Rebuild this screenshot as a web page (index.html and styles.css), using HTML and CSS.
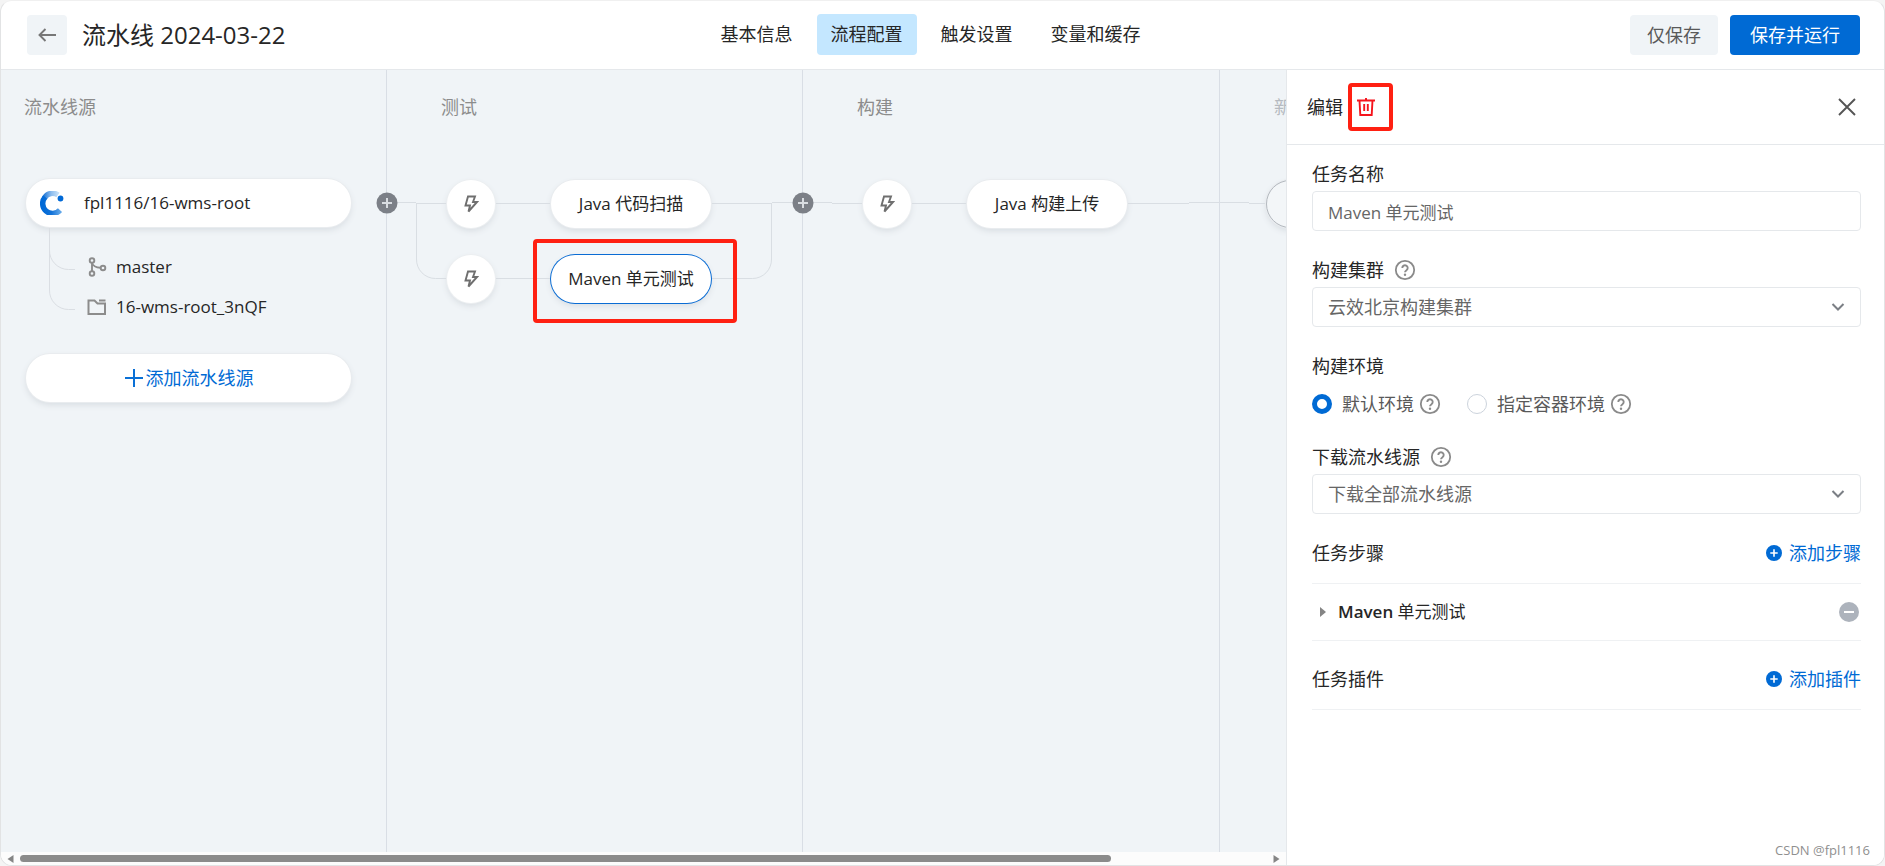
FILE: index.html
```html
<!DOCTYPE html>
<html lang="zh-CN">
<head>
<meta charset="utf-8">
<title>流水线 2024-03-22</title>
<link rel="stylesheet" href="styles.css">
</head>
<body>
<svg class="defs" aria-hidden="true">
  <symbol id="bolt" viewBox="0 0 16 20"><path d="M5 2.500h7l-2 5.500h4L5.500 17.500 7 11.500H2.500z" fill="none" stroke="#6f6f6f" stroke-width="1.900"/></symbol>
  <symbol id="help" viewBox="0 0 22 22"><circle cx="11" cy="11" r="9.200" fill="none" stroke="#8a8a8a" stroke-width="1.800"/><path d="M8.300 9a2.700 2.700 0 1 1 4.200 2.200c-1 .7-1.500 1.100-1.500 2.100" fill="none" stroke="#8a8a8a" stroke-width="1.900"/><circle cx="11" cy="15.700" r="1.200" fill="#8a8a8a"/></symbol>
  <symbol id="chevron" viewBox="0 0 14 10"><path d="M1.500 2 7 7.500 12.500 2" fill="none" stroke="#7b7f85" stroke-width="2"/></symbol>
  <symbol id="plus-dot" viewBox="0 0 22 22"><circle cx="11" cy="11" r="10.500" fill="#7c8087"/><path d="M11 6v10M6 11h10" stroke="#d9dde1" stroke-width="2"/></symbol>
  <symbol id="plus-blue" viewBox="0 0 16 16"><circle cx="8" cy="8" r="8" fill="#006ad4"/><path d="M8 4.300v7.400M4.300 8h7.400" stroke="#fff" stroke-width="1.600"/></symbol>
</svg>
<div class="app">
  <header class="topbar">
    <div class="heading">
      <button class="back" aria-label="返回"><svg width="20" height="16" viewBox="0 0 20 16"><path d="M19 8H2.500M8.500 2l-6 6 6 6" fill="none" stroke="#777" stroke-width="1.900"/></svg></button>
      <h1>流水线 2024-03-22</h1>
    </div>
    <nav class="tabs">
      <a class="tab" href="#">基本信息</a>
      <a class="tab active" href="#">流程配置</a>
      <a class="tab" href="#">触发设置</a>
      <a class="tab" href="#">变量和缓存</a>
    </nav>
    <div class="actions">
      <button class="btn">仅保存</button>
      <button class="btn primary">保存并运行</button>
    </div>
  </header>
  <main class="workspace">
    <section class="canvas">
      <div class="stages">
        <section class="stage source">
          <h2>流水线源</h2>
          <button class="node repo">
            <svg width="24" height="24" viewBox="0 0 24 24">
              <defs><linearGradient id="tail" x1="0" x2="1"><stop offset="0" stop-color="#2d7fd8"/><stop offset=".5" stop-color="#8dbdee"/><stop offset="1" stop-color="#c3def7"/></linearGradient>
              <linearGradient id="bowl" x1="0" x2="1"><stop offset="0" stop-color="#0069d6"/><stop offset=".5" stop-color="#1272d8"/><stop offset="1" stop-color="#5fa5e8"/></linearGradient></defs>
              <path d="M4.500 7A9.300 9.300 0 0 1 18 4" fill="none" stroke="url(#tail)" stroke-width="5.500"/>
              <path d="M5.200 6A9 9 0 1 0 20 19.200" fill="none" stroke="url(#bowl)" stroke-width="5.500"/>
              <circle cx="20.500" cy="7.500" r="2.900" fill="#0069d6"/>
            </svg>
            <span>fpl1116/16-wms-root</span>
          </button>
          <div class="details">
            <svg class="tree" width="26" height="83" viewBox="0 0 26 83"><path d="M.5 0v62a19 19 0 0 0 19 19.500H26M.5 22a19 19 0 0 0 19 19.500H26" fill="none" stroke="#dadee3"/></svg>
            <ul>
              <li><svg width="20" height="20" viewBox="0 0 20 20"><g fill="none" stroke="#8c8c8c" stroke-width="1.900"><circle cx="5" cy="3.500" r="2.300"/><circle cx="5" cy="16.500" r="2.300"/><circle cx="16" cy="11" r="2.300"/><path d="M5 6v8M5 6c1 3 4 4.500 8.500 4.700"/></g></svg>master</li>
              <li><svg width="20" height="20" viewBox="0 0 20 20"><path d="M1.500 3.500h6l3 3h7.500v10.500H1.500zM12 3.500h6.500" fill="none" stroke="#8c8c8c" stroke-width="2"/></svg>16-wms-root_3nQF</li>
            </ul>
          </div>
          <button class="node add"><svg width="20" height="20" viewBox="0 0 20 20"><path d="M10 1v18M1 10h18" stroke="#0a70d6" stroke-width="2"/></svg>添加流水线源</button>
        </section>

        <section class="stage">
          <svg class="wires" width="417" height="260" viewBox="0 0 417 260"><g fill="none" stroke="#d9dee3"><path d="M0 132.500h29M385 132.500h32M29 133.500h356M29.500 133v56a19 19 0 0 0 19 19.500h317a19 19 0 0 0 19-19.500v-56"/></g></svg>
          <button class="insert" aria-label="添加阶段"><svg width="22" height="22"><use href="#plus-dot"/></svg></button>
          <h2>测试</h2>
          <div class="lane">
            <button class="trigger" aria-label="触发"><svg width="16" height="20"><use href="#bolt"/></svg></button>
            <button class="node task">Java 代码扫描</button>
          </div>
          <div class="lane">
            <button class="trigger" aria-label="触发"><svg width="16" height="20"><use href="#bolt"/></svg></button>
            <div class="marked"><button class="node task selected">Maven 单元测试</button><i class="marker"></i></div>
          </div>
        </section>

        <section class="stage">
          <svg class="wires" width="417" height="260" viewBox="0 0 417 260"><path d="M0 132.500h29M29 133.500h357M386 132.500h31" fill="none" stroke="#d9dee3"/></svg>
          <button class="insert" aria-label="添加阶段"><svg width="22" height="22"><use href="#plus-dot"/></svg></button>
          <h2>构建</h2>
          <div class="lane">
            <button class="trigger" aria-label="触发"><svg width="16" height="20"><use href="#bolt"/></svg></button>
            <button class="node task">Java 构建上传</button>
          </div>
        </section>

        <section class="stage pending">
          <svg class="wires" width="417" height="260" viewBox="0 0 417 260"><path d="M0 132.500h29M29 133.500h20" fill="none" stroke="#d9dee3"/></svg>
          <h2>新</h2>
          <div class="lane"><button class="node task" aria-label="新任务"></button></div>
        </section>
      </div>
      <div class="scrollbar">
        <svg width="7" height="8" viewBox="0 0 7 8"><path d="M6.500 0v8L.5 4z" fill="#858585"/></svg>
        <div class="track"><div class="thumb"></div></div>
        <svg width="7" height="8" viewBox="0 0 7 8"><path d="M.5 0v8l6-4z" fill="#858585"/></svg>
      </div>
    </section>

    <aside class="panel">
      <div class="panel-head">
        <h2>编辑</h2>
        <div class="marked"><button class="icon-btn" aria-label="删除"><svg width="20" height="20" viewBox="0 0 20 20"><path d="M1 3.500h18M10 1v2.500M3.500 3.500l.8 14.500h11.400l.8-14.500M8.200 7v7M11.800 7v7" fill="none" stroke="#f5141c" stroke-width="1.900"/></svg></button><i class="marker"></i></div>
        <button class="icon-btn close" aria-label="关闭"><svg width="18" height="18" viewBox="0 0 18 18"><path d="M1 1l16 16M17 1 1 17" stroke="#555" stroke-width="1.900"/></svg></button>
      </div>
      <form class="form">
        <div class="field">
          <label for="task-name">任务名称</label>
          <input id="task-name" class="control mixed" type="text" value="Maven 单元测试">
        </div>
        <div class="field">
          <div class="label-row"><label for="cluster">构建集群</label><svg width="22" height="22"><use href="#help"/></svg></div>
          <div class="select"><select id="cluster" class="control"><option>云效北京构建集群</option></select><svg width="14" height="10"><use href="#chevron"/></svg></div>
        </div>
        <fieldset class="field">
          <legend>构建环境</legend>
          <div class="radios">
            <input id="env-default" type="radio" name="env" checked><label for="env-default">默认环境</label><svg width="22" height="22"><use href="#help"/></svg>
            <input id="env-container" type="radio" name="env"><label for="env-container">指定容器环境</label><svg width="22" height="22"><use href="#help"/></svg>
          </div>
        </fieldset>
        <div class="field">
          <div class="label-row"><label for="download">下载流水线源</label><svg width="22" height="22"><use href="#help"/></svg></div>
          <div class="select"><select id="download" class="control"><option>下载全部流水线源</option></select><svg width="14" height="10"><use href="#chevron"/></svg></div>
        </div>
        <div class="section-row"><h3>任务步骤</h3><a href="#"><svg width="16" height="16"><use href="#plus-blue"/></svg>添加步骤</a></div>
        <div class="step">
          <svg width="6" height="10" viewBox="0 0 6 10"><path d="M0 0v10l6-5z" fill="#858585"/></svg>
          <span><b>Maven</b> 单元测试</span>
          <button type="button" class="icon-btn" aria-label="移除"><svg width="20" height="20" viewBox="0 0 20 20"><circle cx="10" cy="10" r="10" fill="#adb3bc"/><path d="M5 10h10" stroke="#fff" stroke-width="2"/></svg></button>
        </div>
        <div class="section-row plugins"><h3>任务插件</h3><a href="#"><svg width="16" height="16"><use href="#plus-blue"/></svg>添加插件</a></div>
      </form>
      <footer>CSDN @fpl1116</footer>
    </aside>
  </main>
</div>
</body>
</html>
```
FILE: styles.css
```css
* { box-sizing: border-box; }
body {
  margin: 0;
  background: #f4f4f4;
  color: #262626;
  font: 18px/28px "Open Sans", "Noto Sans CJK SC", sans-serif;
}
h1, h2, h3, ul { margin: 0; padding: 0; font-weight: 400; }
h2, h3 { font-size: 18px; }
button, input, select { font: inherit; color: inherit; }
button { padding: 0; border: 0; background: none; cursor: pointer; }
a { color: inherit; text-decoration: none; }
svg { flex: none; display: block; }
.defs { position: absolute; width: 0; height: 0; }

.app {
  height: 100vh;
  display: flex;
  flex-direction: column;
  border: 1px solid #e2e3e4;
  border-top-color: #f0f0f0;
  border-radius: 12px;
  background: #fff;
  overflow: hidden;
}

.topbar {
  display: grid;
  grid-template-columns: 1fr auto 1fr;
  align-items: center;
  padding: 13px 24px 14px 0;
  border-bottom: 1px solid #e5e8eb;
}
.heading { display: flex; align-items: center; gap: 15px; padding-left: 26px; }
.back {
  width: 40px;
  height: 40px;
  display: grid;
  place-items: center;
  border-radius: 4px;
  background: #f0f4f7;
}
h1 { font-size: 24px; }
.tabs { display: flex; gap: 10px; }
.tab { padding: 6px 14px 7px; border-radius: 4px; }
.tab.active { background: #c4e7ff; }
.actions { display: flex; justify-content: flex-end; gap: 12px; }
.btn {
  height: 40px;
  padding: 0 17px;
  border-radius: 4px;
  background: #f0f4f7;
  color: #595959;
}
.btn.primary { padding: 0 20px; background: #006ad4; color: #fff; }

.workspace {
  flex: 1;
  min-height: 0;
  display: grid;
  grid-template-columns: minmax(0, 1fr) 598px;
}
.canvas { display: flex; flex-direction: column; min-height: 0; }
.stages { flex: 1; display: flex; overflow: hidden; background: #f0f4f7; }
.stage {
  flex: none;
  position: relative;
  width: 416px;
  padding-top: 23px;
  border-left: 1px solid #d9dee5;
}
.stage:nth-child(3) { width: 417px; }
.stage h2 { padding-left: 54px; margin-bottom: 59px; color: #8c8c8c; }
.stage.source { width: 385px; padding: 23px 35px 0 25px; border-left: 0; }
.stage.source h2 { padding: 0; margin: 0 0 58px -2px; }
.wires { position: absolute; top: 0; left: 0; }
.insert { position: absolute; top: 122px; left: -11px; z-index: 1; }

.node {
  height: 48px;
  border-radius: 24px;
  background: #fff;
  box-shadow: 0 0 0 1px #e9ecef, 0 3px 6px #d8dde2;
}
.repo {
  width: 100%;
  display: flex;
  align-items: center;
  gap: 20px;
  padding: 0 14px;
  font-size: 17px;
}
.details { position: relative; padding: 26px 0 0 61px; }
.tree { position: absolute; top: 1px; left: 23px; }
.details ul { display: grid; gap: 12px; list-style: none; font-size: 17px; }
.details li { display: flex; align-items: center; gap: 9px; }
.add {
  width: 100%;
  display: flex;
  align-items: center;
  justify-content: center;
  gap: 2px;
  margin-top: 33px;
  color: #006ad4;
}
.lane {
  position: relative;
  display: flex;
  gap: 56px;
  margin-bottom: 27px;
  padding-left: 60px;
}
.trigger {
  width: 48px;
  height: 48px;
  display: grid;
  place-items: center;
  border-radius: 50%;
  background: #fff;
  box-shadow: 0 0 0 1px #eceff1, 0 3px 6px #d8dde2;
}
.task { width: 160px; font-size: 17px; }
.task.selected { box-shadow: 0 0 0 1px #0a6cd4, 0 3px 6px #d8dde2; }
.pending h2 { color: #b5bac0; }
.pending .lane { padding-left: 46px; }
.pending .task { border: 1px solid #b3b8be; background: #f3f6f8; }
.marked { position: relative; display: flex; }
.marker {
  position: absolute;
  inset: -16px -26px -20px -18px;
  border: 4px solid #ff2012;
  border-radius: 4px;
  pointer-events: none;
}

.scrollbar {
  display: flex;
  align-items: center;
  gap: 6px;
  height: 13px;
  padding: 0 6px;
  background: #fcfcfc;
}
.track { flex: 1; }
.thumb { width: 87.5%; height: 7px; border-radius: 4px; background: #8b8b8b; }

.panel {
  display: flex;
  flex-direction: column;
  border-left: 1px solid #e5e8eb;
  background: #fff;
}
.panel-head {
  display: flex;
  align-items: center;
  gap: 13px;
  height: 75px;
  padding: 0 28px 0 20px;
  border-bottom: 1px solid #e5e8eb;
}
.panel-head .marker { inset: -14px -17px -14px -8px; }
.close { margin-left: auto; }
.form { flex: 1; padding: 15px 23px 0 25px; }
.field { margin: 0 0 25px; padding: 0; border: 0; }
.field > label, .label-row, legend { display: flex; padding: 0; margin-bottom: 3px; }
.label-row { align-items: center; gap: 10px; }
.control {
  display: block;
  width: 100%;
  height: 40px;
  padding: 0 15px;
  border: 1px solid #e5e8eb;
  border-radius: 4px;
  background: #fff;
  color: #666;
  appearance: none;
  outline: 0;
}
.mixed { font-size: 17px; }
.select { display: grid; align-items: center; }
.select > * { grid-area: 1 / 1; }
.select svg { justify-self: end; margin-right: 16px; pointer-events: none; }
.radios { display: flex; align-items: center; padding-top: 7px; color: #595959; }
.radios input {
  width: 20px;
  height: 20px;
  margin: 0 10px 0 0;
  border: 1px solid #ccd3dc;
  border-radius: 50%;
  appearance: none;
}
.radios input:checked { border: 5px solid #006ad4; }
.radios svg { margin: 0 26px 0 5px; }
.section-row {
  display: flex;
  justify-content: space-between;
  align-items: center;
  padding-bottom: 16px;
  border-bottom: 1px solid #eff1f3;
}
.section-row a { display: flex; align-items: center; gap: 7px; color: #006ad4; }
.plugins { padding-top: 24px; }
.step {
  display: flex;
  align-items: center;
  gap: 12px;
  height: 57px;
  padding: 0 2px 0 8px;
  border-bottom: 1px solid #eff1f3;
  font-size: 17px;
}
.step b { font-weight: 600; }
.step .icon-btn { margin-left: auto; }
footer {
  padding: 0 14px 5px;
  color: #8f8f8f;
  font-size: 13px;
  line-height: 20px;
  text-align: right;
}
```
